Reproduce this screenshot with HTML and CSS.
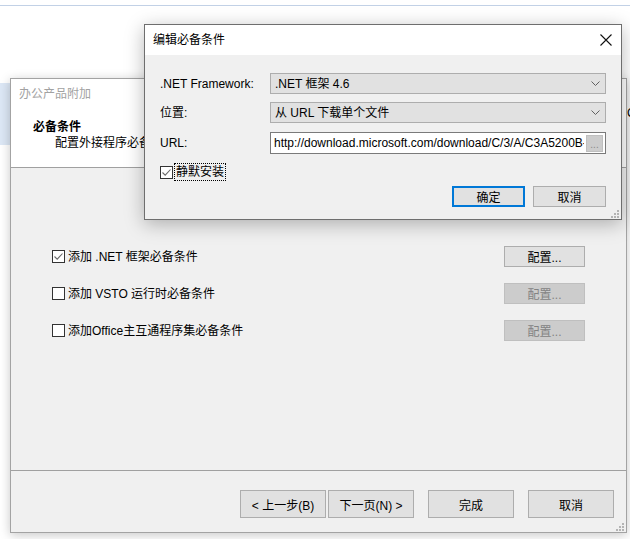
FILE: index.html
```html
<!DOCTYPE html>
<html lang="zh-CN">
<head>
<meta charset="utf-8">
<title>编辑必备条件</title>
<link rel="stylesheet" href="styles.css">
</head>
<body>
<div class="desktop">
  <div class="topline"></div>
  <div class="bluepatch"></div>
  <div class="peek">C</div>

  <div class="window main">
    <div class="main-top">
      <div class="main-title">办公产品附加</div>
      <div class="main-header">
        <div class="hdr-title">必备条件</div>
        <div class="hdr-sub">配置外接程序必备条件。</div>
      </div>
    </div>
    <div class="main-body">
      <div class="opt-row">
        <label class="chk"><span class="box checked"><svg viewBox="0 0 11 11" width="11" height="11"><path d="M1.5 5.5 L4.2 8.2 L9.5 2.5" fill="none" stroke="#6a6a6a" stroke-width="1.1"/></svg></span><span class="chk-text">添加 .NET 框架必备条件</span></label>
        <button class="btn cfg">配置...</button>
      </div>
      <div class="opt-row">
        <label class="chk"><span class="box"></span><span class="chk-text">添加 VSTO 运行时必备条件</span></label>
        <button class="btn cfg disabled">配置...</button>
      </div>
      <div class="opt-row">
        <label class="chk"><span class="box"></span><span class="chk-text">添加Office主互通程序集必备条件</span></label>
        <button class="btn cfg disabled">配置...</button>
      </div>
    </div>
    <div class="main-footer">
      <button class="btn wiz prev">&lt; 上一步(B)</button>
      <button class="btn wiz next">下一页(N) &gt;</button>
      <button class="btn wiz finish">完成</button>
      <button class="btn wiz cancel">取消</button>
    </div>
    <svg class="grip main-grip" width="8" height="8" viewBox="0 0 8 8"><g fill="#b4b4b4"><rect x="6" y="0" width="2" height="2"/><rect x="3" y="3" width="2" height="2"/><rect x="6" y="3" width="2" height="2"/><rect x="0" y="6" width="2" height="2"/><rect x="3" y="6" width="2" height="2"/><rect x="6" y="6" width="2" height="2"/></g></svg>
  </div>

  <div class="window dialog">
    <div class="dlg-titlebar">
      <span class="dlg-title">编辑必备条件</span>
      <svg class="close" width="12" height="12" viewBox="0 0 12 12"><path d="M0.5 0.5 L11.5 11.5 M11.5 0.5 L0.5 11.5" stroke="#111" stroke-width="1.1" fill="none"/></svg>
    </div>
    <div class="dlg-body">
      <div class="field-row r1">
        <span class="lbl">.NET Framework:</span>
        <div class="combo"><span class="combo-text">.NET 框架 4.6</span><svg class="chev" width="9" height="5" viewBox="0 0 9 5"><path d="M0.5 0.5 L4.5 4.5 L8.5 0.5" fill="none" stroke="#606060" stroke-width="1"/></svg></div>
      </div>
      <div class="field-row r2">
        <span class="lbl">位置:</span>
        <div class="combo"><span class="combo-text">从 URL 下载单个文件</span><svg class="chev" width="9" height="5" viewBox="0 0 9 5"><path d="M0.5 0.5 L4.5 4.5 L8.5 0.5" fill="none" stroke="#606060" stroke-width="1"/></svg></div>
      </div>
      <div class="field-row r3">
        <span class="lbl">URL:</span>
        <div class="textbox"><span class="tb-text">http://download.microsoft.com/download/C/3/A/C3A5200B-D33C-47E9-9D70-2F7C65DAAD94/</span><span class="dots-btn">...</span></div>
      </div>
      <div class="silent-row">
        <label class="chk"><span class="box checked"><svg viewBox="0 0 11 11" width="11" height="11"><path d="M1.5 5.5 L4.2 8.2 L9.5 2.5" fill="none" stroke="#6a6a6a" stroke-width="1.1"/></svg></span><span class="chk-text focus">静默安装</span></label>
      </div>
      <div class="dlg-buttons">
        <button class="btn dlg-btn ok">确定</button>
        <button class="btn dlg-btn">取消</button>
      </div>
    </div>
    <svg class="grip dlg-grip" width="8" height="8" viewBox="0 0 8 8"><g fill="#b4b4b4"><rect x="6" y="0" width="2" height="2"/><rect x="3" y="3" width="2" height="2"/><rect x="6" y="3" width="2" height="2"/><rect x="0" y="6" width="2" height="2"/><rect x="3" y="6" width="2" height="2"/><rect x="6" y="6" width="2" height="2"/></g></svg>
  </div>
</div>
</body>
</html>
```

FILE: styles.css
```css
* { box-sizing: border-box; }
html, body { margin: 0; padding: 0; }
body {
  width: 630px;
  height: 539px;
  overflow: hidden;
  background: #ffffff;
  font-family: "Liberation Sans", "Noto Sans CJK SC", sans-serif;
  font-size: 12px;
  color: #000;
}
.desktop {
  position: relative;
  width: 630px;
  height: 539px;
}
.topline {
  position: absolute;
  left: 0; top: 5px;
  width: 630px; height: 1px;
  background: #c2d1e6;
}
.bluepatch {
  position: absolute;
  left: 0; top: 83px;
  width: 10px; height: 62px;
  background: #dce7f5;
}
.peek {
  position: absolute;
  left: 627px; top: 106px;
  font-size: 12px;
  line-height: 14px;
}
.window { position: absolute; }

/* main wizard window */
.main {
  left: 10px; top: 78px;
  width: 617px; height: 455px;
  border: 1px solid #a3a3a3;
  background: #f0f0f0;
  display: flex;
  flex-direction: column;
  box-shadow: 0 2px 10px rgba(0,0,0,0.22);
}
.main-top {
  height: 89px;
  background: #fff;
  border-bottom: 1px solid #a0a0a0;
  display: flex;
  flex-direction: column;
}
.main-title {
  height: 30px;
  line-height: 30px;
  padding-left: 8px;
  color: #a2a2a2;
  font-size: 12px;
}
.main-header {
  padding: 10px 0 0 22px;
}
.hdr-title {
  font-weight: bold;
  line-height: 16px;
}
.hdr-sub {
  padding-left: 22px;
  line-height: 16px;
}
.main-body {
  height: 303px;
  border-bottom: 1px solid #a0a0a0;
  padding: 78px 41px 0 41px;
  display: flex;
  flex-direction: column;
  gap: 16px;
}
.opt-row {
  height: 21px;
  display: flex;
  align-items: center;
  justify-content: space-between;
}
.chk {
  display: flex;
  align-items: center;
}
.box {
  width: 13px; height: 13px;
  border: 1px solid #333;
  background: #fff;
  display: flex;
  align-items: center;
  justify-content: center;
  flex: none;
}
.box.checked { border-color: #333; }
.chk-text {
  margin-left: 3px;
  line-height: 16px;
}
.chk-text.focus {
  outline: 1px dotted #000;
  outline-offset: 0;
  margin-left: 2px;
  padding: 0 1px;
}
.btn {
  font-family: inherit;
  font-size: 12px;
  background: #e1e1e1;
  border: 1px solid #adadad;
  color: #000;
  padding: 0;
  margin: 0;
}
.cfg {
  width: 81px; height: 21px;
}
.cfg.disabled {
  background: #cccccc;
  border-color: #bfbfbf;
  color: #838383;
}
.main-footer {
  flex: 1;
  display: flex;
  justify-content: flex-end;
  align-items: flex-start;
  padding: 19px 12px 0 0;
}
.wiz {
  width: 86px; height: 28px;
}
.wiz.next { margin-left: 2px; }
.wiz.finish { margin-left: 14px; }
.wiz.cancel { margin-left: 14px; }
.grip { position: absolute; }
.main-grip { right: 2px; bottom: 1px; }

/* dialog */
.dialog {
  left: 144px; top: 24px;
  width: 478px; height: 196px;
  border: 1px solid #6e6e6e;
  background: #f0f0f0;
  box-shadow: 0 4px 18px rgba(0,0,0,0.28);
  display: flex;
  flex-direction: column;
}
.dlg-titlebar {
  height: 30px;
  background: #fff;
  display: flex;
  align-items: center;
  justify-content: space-between;
  padding: 0 9px 0 8px;
}
.dlg-title { line-height: 16px; }
.close { margin-top: -1px; }
.dlg-body {
  flex: 1;
  padding: 18px 15px 0 15px;
  display: flex;
  flex-direction: column;
}
.field-row {
  display: flex;
  align-items: center;
}
.r1, .r2 { height: 21px; }
.r2 { margin-top: 8px; }
.r3 { height: 22px; margin-top: 9px; }
.lbl {
  width: 110px;
  flex: none;
  line-height: 16px;
}
.combo {
  flex: 1;
  height: 100%;
  background: #e1e1e1;
  border: 1px solid #adadad;
  display: flex;
  align-items: center;
  justify-content: space-between;
  padding: 0 5px 0 4px;
}
.combo-text { line-height: 16px; }
.textbox {
  flex: 1;
  height: 100%;
  background: #fff;
  border: 1px solid #7a7a7a;
  display: flex;
  align-items: center;
  padding: 0 2px 0 3px;
  overflow: hidden;
}
.tb-text {
  flex: 1;
  white-space: nowrap;
  overflow: hidden;
  line-height: 16px;
}
.dots-btn {
  flex: none;
  width: 17px; height: 17px;
  background: #cccccc;
  border: 1px solid #bfbfbf;
  color: #8a8a8a;
  font-size: 10px;
  line-height: 18px;
  text-align: center;
  margin-left: 2px;
}
.silent-row {
  margin-top: 10px;
  height: 16px;
  display: flex;
  align-items: center;
}
.dlg-buttons {
  margin-top: 6px;
  display: flex;
  justify-content: flex-end;
  gap: 8px;
}
.dlg-btn {
  width: 73px; height: 21px;
}
.dlg-btn.ok {
  border: 2px solid #0078d7;
}
.dlg-grip { right: 2px; bottom: 1px; }
```
